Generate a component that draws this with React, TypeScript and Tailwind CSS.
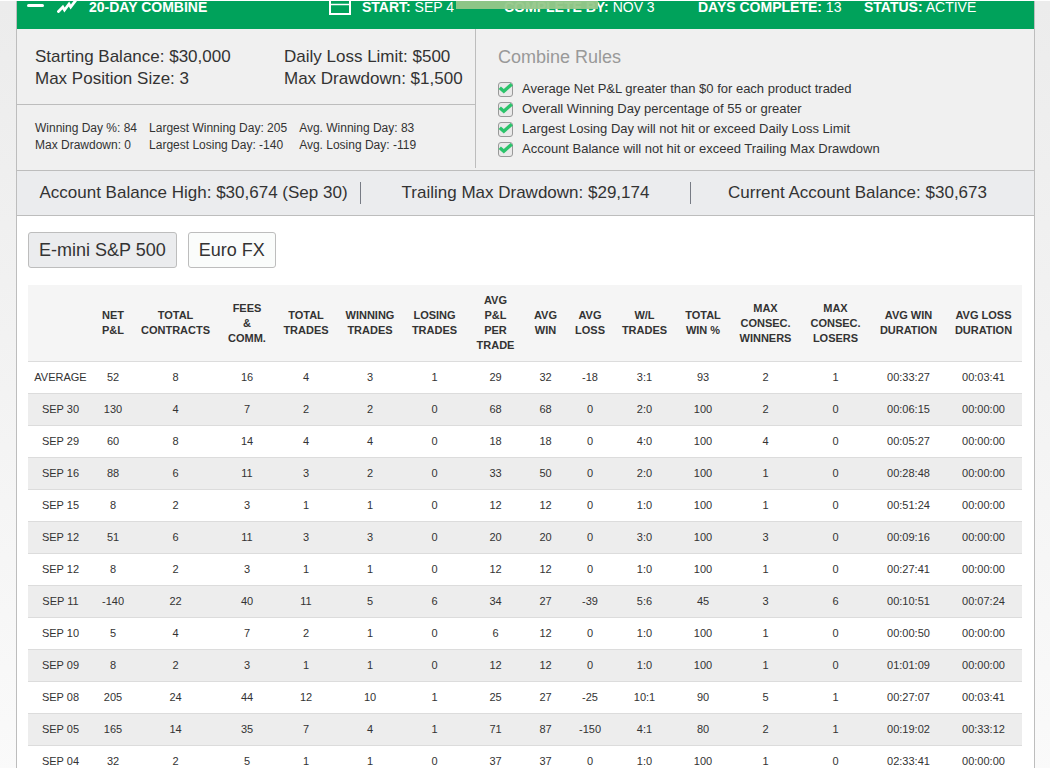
import { useState } from 'react';

const columns = [
  { label: '', width: 'w-[65px]' },
  { label: 'NET\nP&L', width: 'w-[40px]' },
  { label: 'TOTAL\nCONTRACTS', width: 'w-[85px]' },
  { label: 'FEES\n&\nCOMM.', width: 'w-[58px]' },
  { label: 'TOTAL\nTRADES', width: 'w-[60px]' },
  { label: 'WINNING\nTRADES', width: 'w-[68px]' },
  { label: 'LOSING\nTRADES', width: 'w-[61px]' },
  { label: 'AVG\nP&L\nPER\nTRADE', width: 'w-[61px]' },
  { label: 'AVG\nWIN', width: 'w-[39px]' },
  { label: 'AVG\nLOSS', width: 'w-[50px]' },
  { label: 'W/L\nTRADES', width: 'w-[59px]' },
  { label: 'TOTAL\nWIN %', width: 'w-[58px]' },
  { label: 'MAX\nCONSEC.\nWINNERS', width: 'w-[67px]' },
  { label: 'MAX\nCONSEC.\nLOSERS', width: 'w-[73px]' },
  { label: 'AVG WIN\nDURATION', width: 'w-[73px]' },
  { label: 'AVG LOSS\nDURATION', width: 'w-[77px]' },
];

const rows = [
  ['AVERAGE', '52', '8', '16', '4', '3', '1', '29', '32', '-18', '3:1', '93', '2', '1', '00:33:27', '00:03:41'],
  ['SEP 30', '130', '4', '7', '2', '2', '0', '68', '68', '0', '2:0', '100', '2', '0', '00:06:15', '00:00:00'],
  ['SEP 29', '60', '8', '14', '4', '4', '0', '18', '18', '0', '4:0', '100', '4', '0', '00:05:27', '00:00:00'],
  ['SEP 16', '88', '6', '11', '3', '2', '0', '33', '50', '0', '2:0', '100', '1', '0', '00:28:48', '00:00:00'],
  ['SEP 15', '8', '2', '3', '1', '1', '0', '12', '12', '0', '1:0', '100', '1', '0', '00:51:24', '00:00:00'],
  ['SEP 12', '51', '6', '11', '3', '3', '0', '20', '20', '0', '3:0', '100', '3', '0', '00:09:16', '00:00:00'],
  ['SEP 12', '8', '2', '3', '1', '1', '0', '12', '12', '0', '1:0', '100', '1', '0', '00:27:41', '00:00:00'],
  ['SEP 11', '-140', '22', '40', '11', '5', '6', '34', '27', '-39', '5:6', '45', '3', '6', '00:10:51', '00:07:24'],
  ['SEP 10', '5', '4', '7', '2', '1', '0', '6', '12', '0', '1:0', '100', '1', '0', '00:00:50', '00:00:00'],
  ['SEP 09', '8', '2', '3', '1', '1', '0', '12', '12', '0', '1:0', '100', '1', '0', '01:01:09', '00:00:00'],
  ['SEP 08', '205', '24', '44', '12', '10', '1', '25', '27', '-25', '10:1', '90', '5', '1', '00:27:07', '00:03:41'],
  ['SEP 05', '165', '14', '35', '7', '4', '1', '71', '87', '-150', '4:1', '80', '2', '1', '00:19:02', '00:33:12'],
  ['SEP 04', '32', '2', '5', '1', '1', '0', '37', '37', '0', '1:0', '100', '1', '0', '02:33:41', '00:00:00'],
];

const rules = [
  'Average Net P&L greater than $0 for each product traded',
  'Overall Winning Day percentage of 55 or greater',
  'Largest Losing Day will not hit or exceed Daily Loss Limit',
  'Account Balance will not hit or exceed Trailing Max Drawdown',
];

const products = ['E-mini S&P 500', 'Euro FX'];

function TitleBar() {
  return (
    <header className="grid h-7 grid-cols-[72fr_240fr_33fr_142fr_194fr_166fr_170fr] bg-[#00a25b] text-sm leading-3 whitespace-nowrap text-white">
      <div className="flex gap-3 pl-2">
        <button aria-label="Collapse" className="flex h-[9px] w-5 items-center justify-center">
          <span className="h-[3px] w-[17px] rounded-full bg-white" />
        </button>
        <svg className="h-3 w-5" viewBox="0 0 20 12" fill="none" stroke="#fff" strokeWidth="2.8">
          <path d="M0.5 11.5 L5.8 6 L7.5 9 L12 3 L13.7 6 L19 -1" />
        </svg>
      </div>
      <h1 className="font-bold">20-DAY COMBINE</h1>
      <svg className="h-[14px] w-[23px]" viewBox="0 0 23 14" fill="none" stroke="#fff" strokeWidth="2">
        <path d="M1 -2 V13 H21 V-2" />
        <path d="M1 3.5 H21" strokeWidth="1.5" />
      </svg>
      <span>
        <b>START:</b> SEP 4
      </span>
      <span className="relative">
        <b>COMPLETE BY:</b> NOV 3
        <span className="absolute top-0 right-[100px] -left-12 h-2 bg-[#96c78a]/95" />
      </span>
      <span>
        <b>DAYS COMPLETE:</b> 13
      </span>
      <span>
        <b>STATUS:</b> ACTIVE
      </span>
    </header>
  );
}

function Rule({ text }: { text: string }) {
  return (
    <li>
      <label className="flex h-5 items-center gap-[9px]">
        <span className="relative flex">
          <input
            type="checkbox"
            checked
            readOnly
            className="h-[15px] w-[15px] appearance-none rounded-[3px] border border-[#999] bg-[#e9e9e9]"
          />
          <svg className="absolute inset-0 h-[15px] w-[15px]" viewBox="0 0 15 15" fill="none" stroke="#2cc36b" strokeWidth="3.4">
            <path d="M1.8 5.8 L5.8 9.3 L13.8 2.2" />
          </svg>
        </span>
        {text}
      </label>
    </li>
  );
}

function Summary() {
  return (
    <section className="grid grid-cols-[459fr_558fr] border-b border-[#bdbdbd] bg-[#f0f0f0]">
      <div className="mb-[2px] border-r border-[#bdbdbd]">
        <div className="grid grid-cols-[249fr_191fr] border-b border-[#bdbdbd] pt-[17px] pb-[14px] pl-[18px] text-[17px] leading-[22px] whitespace-nowrap">
          <p>Starting Balance: $30,000</p>
          <p>Daily Loss Limit: $500</p>
          <p>Max Position Size: 3</p>
          <p>Max Drawdown: $1,500</p>
        </div>
        <div className="grid grid-cols-[auto_auto_1fr] gap-x-3 pt-[15px] pb-[14px] pl-[18px] text-xs leading-[17px] whitespace-nowrap">
          <p>Winning Day %: 84</p>
          <p>Largest Winning Day: 205</p>
          <p>Avg. Winning Day: 83</p>
          <p>Max Drawdown: 0</p>
          <p>Largest Losing Day: -140</p>
          <p>Avg. Losing Day: -119</p>
        </div>
      </div>
      <div className="pt-4 pl-[22px]">
        <h2 className="text-lg leading-6 text-[#999]">Combine Rules</h2>
        <ul className="mt-[10px] text-[13px]">
          {rules.map((rule) => (
            <Rule key={rule} text={rule} />
          ))}
        </ul>
      </div>
    </section>
  );
}

function BalanceBar() {
  return (
    <section className="grid h-[45px] grid-cols-[344fr_330fr_343fr] items-center border-b border-[#bdbdbd] bg-[#ebecee] text-center text-[17px] leading-[22px] whitespace-nowrap">
      <p className="border-r border-[#777b84] pl-[10px]">Account Balance High: $30,674 (Sep 30)</p>
      <p className="border-r border-[#777b84]">Trailing Max Drawdown: $29,174</p>
      <p className="pr-[10px]">Current Account Balance: $30,673</p>
    </section>
  );
}

function StatsTable() {
  return (
    <table className="mt-[17px] w-full table-fixed border-collapse text-center text-[11px] leading-[15px]">
      <thead className="bg-[#f5f5f5]">
        <tr>
          {columns.map((col, i) => (
            <th key={i} scope="col" className={`py-2 whitespace-pre ${col.width}`}>
              {col.label}
            </th>
          ))}
        </tr>
      </thead>
      <tbody>
        {rows.map((row, i) => (
          <tr key={i} className="h-8 border-t border-[#dcdcdc] even:bg-[#ededed]">
            {row.map((cell, j) => (
              <td key={j}>{cell}</td>
            ))}
          </tr>
        ))}
      </tbody>
    </table>
  );
}

function App() {
  const [product, setProduct] = useState(products[0]);

  return (
    <div className="min-h-screen border-t border-white bg-linear-to-b from-[#ececec] to-[#fafafa] pr-[15px] pl-4 font-['Liberation_Sans',Arial,sans-serif] text-[#333]">
      <main className="min-h-screen border-x border-[#bdbdbd] bg-white">
        <TitleBar />
        <Summary />
        <BalanceBar />
        <div className="pt-4 pr-3 pl-[11px]">
          <div className="flex gap-[11px]">
            {products.map((name) => (
              <button
                key={name}
                onClick={() => setProduct(name)}
                className={`h-9 rounded-[3px] border border-[#bdbdbd] px-[10px] text-lg leading-6 ${
                  product === name ? 'bg-[#ebecee]' : 'bg-[#fafcfb]'
                }`}
              >
                {name}
              </button>
            ))}
          </div>
          <StatsTable />
        </div>
      </main>
    </div>
  );
}

export default App;
